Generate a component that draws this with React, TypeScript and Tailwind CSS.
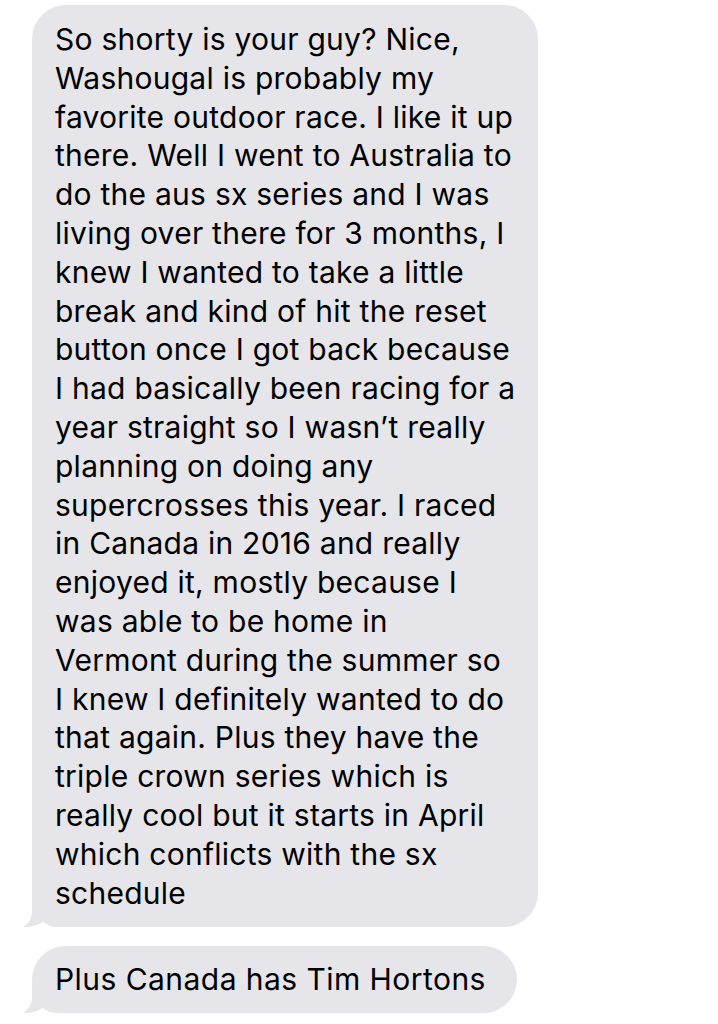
import React from 'react';

const lines = [
  'So shorty is your guy? Nice,',
  'Washougal is probably my',
  'favorite outdoor race. I like it up',
  'there. Well I went to Australia to',
  'do the aus sx series and I was',
  'living over there for 3 months, I',
  'knew I wanted to take a little',
  'break and kind of hit the reset',
  'button once I got back because',
  'I had basically been racing for a',
  'year straight so I wasn\u2019t really',
  'planning on doing any',
  'supercrosses this year. I raced',
  'in Canada in 2016 and really',
  'enjoyed it, mostly because I',
  'was able to be home in',
  'Vermont during the summer so',
  'I knew I definitely wanted to do',
  'that again. Plus they have the',
  'triple crown series which is',
  'really cool but it starts in April',
  'which conflicts with the sx',
  'schedule',
];

// little iMessage tail on the bottom-left corner
const Tail = () => (
  <svg className="absolute bottom-0 left-[-10px]" width="40" height="30" viewBox="0 0 40 30">
    <path
      d="M10 0 L10 14 C10 22 6 27 1 30 C7 30.5 14 29 21 25 C25 28 29 30 36 30 L40 30 L40 0 Z"
      fill="#e5e5ea"
    />
  </svg>
);

const Bubble: React.FC<{ children: React.ReactNode; className?: string }> = ({ children, className }) => (
  <div className={`relative self-start bg-[#e5e5ea] text-black rounded-[34px] ${className ?? ''}`}>
    <Tail />
    <div className="relative">{children}</div>
  </div>
);

export default function App() {
  return (
    <div
      className="w-[718px] h-[1024px] bg-white overflow-hidden flex flex-col pt-[5px] pl-[32px]"
      style={{ fontFamily: 'Inter, "Noto Sans", sans-serif' }}
    >
      <Bubble className="w-[506px] pt-[15px] pb-[15px] pl-[23px] text-[30px] leading-[38.8px] tracking-[0.25px]">
        {lines.map((l) => (
          <div key={l} className="whitespace-nowrap">
            {l}
          </div>
        ))}
      </Bubble>
      <Bubble className="mt-[19px] w-[485px] h-[67px] pl-[23px] flex items-center text-[30px] tracking-[0.45px]">
        Plus Canada has Tim Hortons
      </Bubble>
    </div>
  );
}
